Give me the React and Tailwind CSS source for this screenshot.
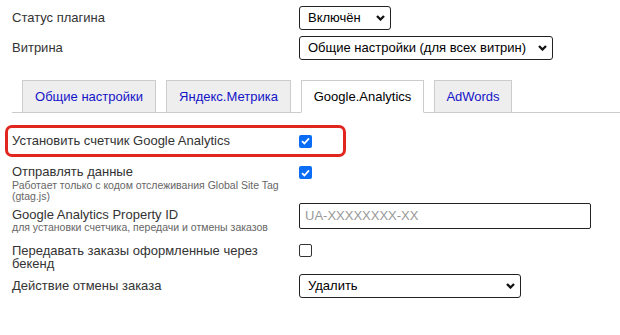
import React from 'react';

const Chevron = () => (
  <svg width="9" height="6" viewBox="0 0 9 6" className="shrink-0">
    <path d="M1 1 L4.5 4.5 L8 1" fill="none" stroke="#111" strokeWidth="2.3" />
  </svg>
);

const Select = ({ value, width }) => (
  <div className={`flex h-[24px] items-center justify-between rounded-[3px] border border-[#222] bg-white pl-[8px] pr-[5px] text-[13px] text-black ${width}`}>
    <span className="whitespace-nowrap">{value}</span>
    <Chevron />
  </div>
);

const Check = ({ checked }) =>
  checked ? (
    <span className="flex h-[13px] w-[13px] items-center justify-center rounded-[2px] bg-[#0b6cf5]">
      <svg width="9" height="8" viewBox="0 0 9 8">
        <path d="M1 4.2 L3.4 6.5 L8 1.3" fill="none" stroke="#fff" strokeWidth="1.8" />
      </svg>
    </span>
  ) : (
    <span className="block h-[13px] w-[13px] rounded-[2px] border border-[#333] bg-white" />
  );

const tabs = [
  { id: 'general', label: 'Общие настройки', w: 'w-[134px]' },
  { id: 'metrika', label: 'Яндекс.Метрика', w: 'w-[125px]' },
  { id: 'ga', label: 'Google.Analytics', w: 'w-[123px]', active: true },
  { id: 'adwords', label: 'AdWords', w: 'w-[78px]' }
];

const App = () => {
  return (
    <div className="h-[335px] w-[620px] overflow-hidden bg-white font-['Liberation_Sans',Arial,sans-serif] text-[#333]">
      <div className="pt-[6px]">
        <div className="flex items-center pl-3">
          <div className="w-[287px] text-[13px]">Статус плагина</div>
          <Select value="Включён" width="w-[92px]" />
        </div>
        <div className="mt-[6px] flex items-center pl-3">
          <div className="w-[287px] text-[13px]">Витрина</div>
          <Select value="Общие настройки (для всех витрин)" width="w-[254px]" />
        </div>

        <div className="ml-3 mt-[20px] flex h-[33px] items-end gap-[10px] border-b border-[#ccc] pl-[10px]">
          {tabs.map((t) => (
            <div
              key={t.id}
              className={`-mb-px flex h-[33px] items-center justify-center border border-[#ccc] text-[13px] ${t.w} ${
                t.active ? 'border-b-white bg-white text-black' : 'bg-[#eee] text-[#1414c8]'
              }`}
            >
              {t.label}
            </div>
          ))}
        </div>

        <div className="ml-[5px] mt-[12px] flex h-[32px] w-[341px] items-center rounded-[7px] border-[3px] border-[#e0261f] pl-[4px]">
          <div className="w-[287px] text-[13px]">Установить счетчик Google Analytics</div>
          <Check checked />
        </div>

        <div className="mt-[7px] flex items-start pl-3">
          <div className="w-[287px]">
            <div className="text-[13px] leading-[16px]">Отправлять данные</div>
            <div className="text-[10.5px] leading-[11px] text-[#666]">
              Работает только с кодом отслеживания Global Site Tag (gtag.js)
            </div>
          </div>
          <div className="pt-[2px]">
            <Check checked />
          </div>
        </div>

        <div className="mt-[6px] flex items-start pl-3">
          <div className="w-[287px]">
            <div className="text-[13px] leading-[14px]">Google Analytics Property ID</div>
            <div className="text-[10.5px] leading-[11px] text-[#666]">для установки счетчика, передачи и отмены заказов</div>
          </div>
          <div className="-mt-[5px] flex h-[26px] w-[292px] items-center rounded-[2px] border border-[#222] px-[5px] text-[13px] text-[#999]">
            UA-XXXXXXXX-XX
          </div>
        </div>

        <div className="mt-[11px] flex items-start pl-3">
          <div className="w-[287px]">
            <div className="w-[265px] text-[13px] leading-[13px]">Передавать заказы оформленные через бекенд</div>
          </div>
          <Check />
        </div>

        <div className="mt-[4px] flex items-center pl-3">
          <div className="w-[287px] text-[13px]">Действие отмены заказа</div>
          <Select value="Удалить" width="w-[222px]" />
        </div>
      </div>
    </div>
  );
};

export default App;
